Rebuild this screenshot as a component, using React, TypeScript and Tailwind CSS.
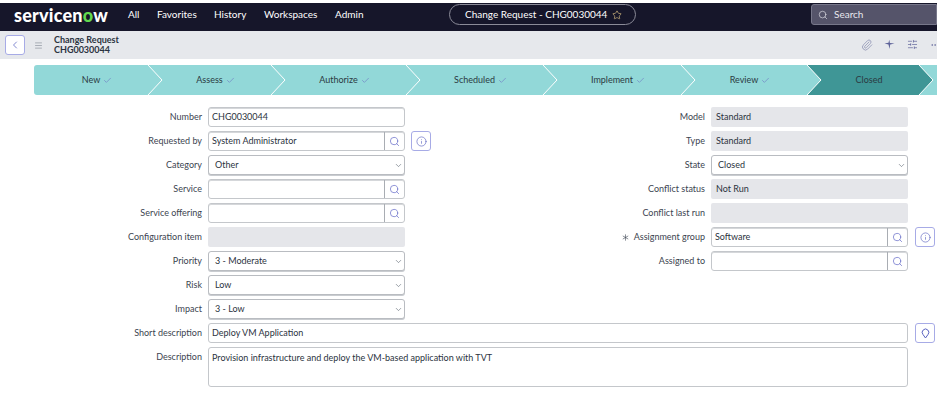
import { Asterisk, Check, ChevronDown, ChevronLeft, Info, Menu, MoreHorizontal, Paperclip, Search, SlidersHorizontal, Star } from 'lucide-react';

const steps = [
  { label: 'New', width: 'w-[114px]' },
  { label: 'Assess', width: 'w-[123px]' },
  { label: 'Authorize', width: 'w-[135px]' },
  { label: 'Scheduled', width: 'w-[137px]' },
  { label: 'Implement', width: 'w-[138px]' },
  { label: 'Review', width: 'w-[126px]' },
];

const navItems = [
  { label: 'All', width: 'w-[29px]' },
  { label: 'Favorites', width: 'w-[57px]' },
  { label: 'History', width: 'w-[50px]' },
  { label: 'Workspaces', width: 'w-[71px]' },
  { label: 'Admin', width: 'w-[40px]' },
];

const Tip = ({ fill }: { fill: string }) => (
  <svg className="absolute left-full top-0 z-10 h-[30px] w-[15px]" viewBox="0 0 15 30" style={{ overflow: 'visible' }}>
    <polygon points="0,0 14,15 0,30" fill={fill} />
    <polyline points="0,0 14,15 0,30" fill="none" stroke="#fff" strokeWidth="1" />
  </svg>
);

const Label = ({ text }: { text: string }) => (
  <span className="block text-right text-[9px] leading-[20px] text-[#3c4450]">{text}</span>
);

const LookupButton = () => (
  <span className="flex h-full w-[20px] shrink-0 items-center justify-center border-l border-[#a9adb3]">
    <Search size={11} strokeWidth={1.6} className="text-[#6a6fc9]" />
  </span>
);

const InfoButton = ({ wide }: { wide?: boolean }) => (
  <span className={`${wide ? 'ml-[7px]' : 'ml-[6px]'} flex h-[20px] w-[20px] shrink-0 items-center justify-center rounded-[3px] border border-[#a7abe6]`}>
    <Info size={11} strokeWidth={1.4} className="text-[#5a63c0]" />
  </span>
);

const TextField = ({ value, lookup }: { value?: string; lookup?: boolean }) => (
  <div className="flex h-[20px] w-[197px] items-center rounded-[3px] border border-[#c4c7cb] bg-white shadow-[inset_0_1px_0_#d5d7da]">
    <span className="flex-1 pl-[3px] text-[9px] text-[#2b3340]">{value}</span>
    {lookup && <LookupButton />}
  </div>
);

const SelectField = ({ value }: { value: string }) => (
  <div className="flex h-[20px] w-[197px] items-center rounded-[3px] border border-[#b9bcc1] bg-white shadow-[0_1px_0_#c9ccd0]">
    <span className="flex-1 pl-[6px] text-[9px] text-[#2b3340]">{value}</span>
    <ChevronDown size={9} strokeWidth={1.6} className="mr-[1px] text-[#5b6470]" />
  </div>
);

const ReadOnly = ({ value }: { value?: string }) => (
  <div className="flex h-[20px] w-[197px] items-center rounded-[2px] bg-[#e5e6ea] pl-[5px] text-[9px] text-[#2b3340]">{value}</div>
);

const Row = ({ label, children, required }: { label: string; children: React.ReactNode; required?: boolean }) => (
  <div className="flex h-[20px] items-center">
    <div className="mr-[6px] flex w-[202px] shrink-0 items-center justify-end gap-[3px]">
      {required && <Asterisk size={11} strokeWidth={1.4} className="text-[#4a525e]" />}
      <Label text={label} />
    </div>
    {children}
  </div>
);

export default function App() {
  return (
    <div className="h-[409px] w-[937px] overflow-hidden bg-white pt-[3px] font-['Lato',sans-serif]">
      {/* Top nav */}
      <header className="flex h-[28px] items-start bg-[#16162a] pt-[1px] text-white">
        <div className="ml-[14px] flex h-[21px] w-[100px] items-center text-[18px] font-black leading-none tracking-[0.2px]">
          <span>servicen<span className="text-[#62d84e]">o</span>w</span>
        </div>
        <nav className="ml-[14px] flex h-[21px] items-center text-[10px]">
          {navItems.map((item) => (
            <span key={item.label} className={item.width}>{item.label}</span>
          ))}
        </nav>
        <div className="ml-[74px] flex h-[21px] w-[187px] items-center whitespace-nowrap rounded-full border border-[#8b8b98] pl-[15px] text-[10px]">
          Change Request - CHG0030044
          <Star size={10} strokeWidth={1.5} className="ml-[5px] text-[#e4c788]" />
        </div>
        <div className="ml-[175px] flex h-[21px] flex-1 items-center rounded-l-[3px] border border-[#77778a] bg-[#55546a] pl-[6px] text-[10px] text-[#e7e7ee]">
          <Search size={10} strokeWidth={1.5} className="mr-[6px]" />
          Search
        </div>
      </header>

      {/* Record bar */}
      <div className="flex h-[28px] items-center bg-[#e6e8ec]">
        <span className="ml-[5px] flex h-[20px] w-[20px] items-center justify-center rounded-[3px] border border-[#a7abe6] bg-white">
          <ChevronLeft size={12} strokeWidth={1.5} className="text-[#5a63c0]" />
        </span>
        <Menu size={9} strokeWidth={1.5} className="ml-[9px] text-[#7a818c]" />
        <div className="ml-[11px] text-[9px] font-bold leading-[10px] text-[#2b3340]">
          <div>Change Request</div>
          <div>CHG0030044</div>
        </div>
        <div className="mb-[1px] ml-auto flex items-center text-[#5d6299]">
          <Paperclip size={12} strokeWidth={1.5} className="mr-[11px] text-[#8a8fb0]" />
          <svg width="11" height="11" viewBox="0 0 11 11" className="mr-[12px]" fill="currentColor">
            <path d="M0.5 4.5 L4.5 3.8 L5.3 0.8 L5.9 4 L10.5 4.5 L6.2 5.5 L5.5 10 L4.5 5.5 Z" />
          </svg>
          <SlidersHorizontal size={11} strokeWidth={1.5} className="mr-[12px]" />
          <MoreHorizontal size={10} strokeWidth={1.5} className="mr-[-3px]" />
        </div>
      </div>

      {/* Process stepper */}
      <div className="mt-[6px] flex h-[30px] pl-[34px] text-[9px] text-[#2b3a42]">
        {steps.map((step, i) => (
          <div
            key={step.label}
            className={`${step.width} relative flex items-center justify-center bg-[#92d8d8] pl-[12px] ${i === 0 ? 'rounded-l-[3px]' : ''}`}
          >
            {step.label}
            <Check size={9} strokeWidth={1.5} className="ml-[3px] text-[#6a70c0]" />
            <Tip fill="#92d8d8" />
          </div>
        ))}
        <div className="relative flex w-[112px] items-center justify-center bg-[#3f9696] pl-[12px]">
          Closed
          <Tip fill="#3f9696" />
        </div>
        <div className="flex-1 bg-[#92d8d8]" />
      </div>

      {/* Form */}
      <div className="mt-[12px] flex">
        <div className="flex w-[503px] flex-col gap-[4px]">
          <Row label="Number"><TextField value="CHG0030044" /></Row>
          <Row label="Requested by"><TextField value="System Administrator" lookup /><InfoButton /></Row>
          <Row label="Category"><SelectField value="Other" /></Row>
          <Row label="Service"><TextField lookup /></Row>
          <Row label="Service offering"><TextField lookup /></Row>
          <Row label="Configuration item"><ReadOnly /></Row>
          <Row label="Priority"><SelectField value="3 - Moderate" /></Row>
          <Row label="Risk"><SelectField value="Low" /></Row>
          <Row label="Impact"><SelectField value="3 - Low" /></Row>
        </div>
        <div className="flex flex-col gap-[4px]">
          <Row label="Model"><ReadOnly value="Standard" /></Row>
          <Row label="Type"><ReadOnly value="Standard" /></Row>
          <Row label="State"><SelectField value="Closed" /></Row>
          <Row label="Conflict status"><ReadOnly value="Not Run" /></Row>
          <Row label="Conflict last run"><ReadOnly /></Row>
          <Row label="Assignment group" required><TextField value="Software" lookup /><InfoButton wide /></Row>
          <Row label="Assigned to"><TextField lookup /></Row>
        </div>
      </div>
      <div className="mt-[4px] flex flex-col gap-[4px]">
        <div className="flex h-[20px] items-center">
          <div className="mr-[6px] w-[202px] shrink-0"><Label text="Short description" /></div>
          <div className="flex h-[20px] w-[700px] items-center rounded-[3px] border border-[#c4c7cb] pl-[3px] text-[9px] text-[#2b3340]">Deploy VM Application</div>
          <span className="ml-[7px] flex h-[20px] w-[20px] items-center justify-center rounded-[3px] border border-[#a7abe6]">
            <svg width="9" height="11" viewBox="0 0 9 11" fill="none" stroke="#5a63c0" strokeWidth="1">
              <path d="M4.5 10 L2 6.5 A3.3 3.3 0 1 1 7 6.5 Z" />
            </svg>
          </span>
        </div>
        <div className="flex">
          <div className="mr-[6px] w-[202px] shrink-0"><Label text="Description" /></div>
          <div className="h-[40px] w-[700px] rounded-[3px] border border-[#c4c7cb] pl-[3px] pt-[3px] text-[9px] text-[#2b3340]">
            Provision infrastructure and deploy the VM-based application with TVT
          </div>
        </div>
      </div>
    </div>
  );
}
